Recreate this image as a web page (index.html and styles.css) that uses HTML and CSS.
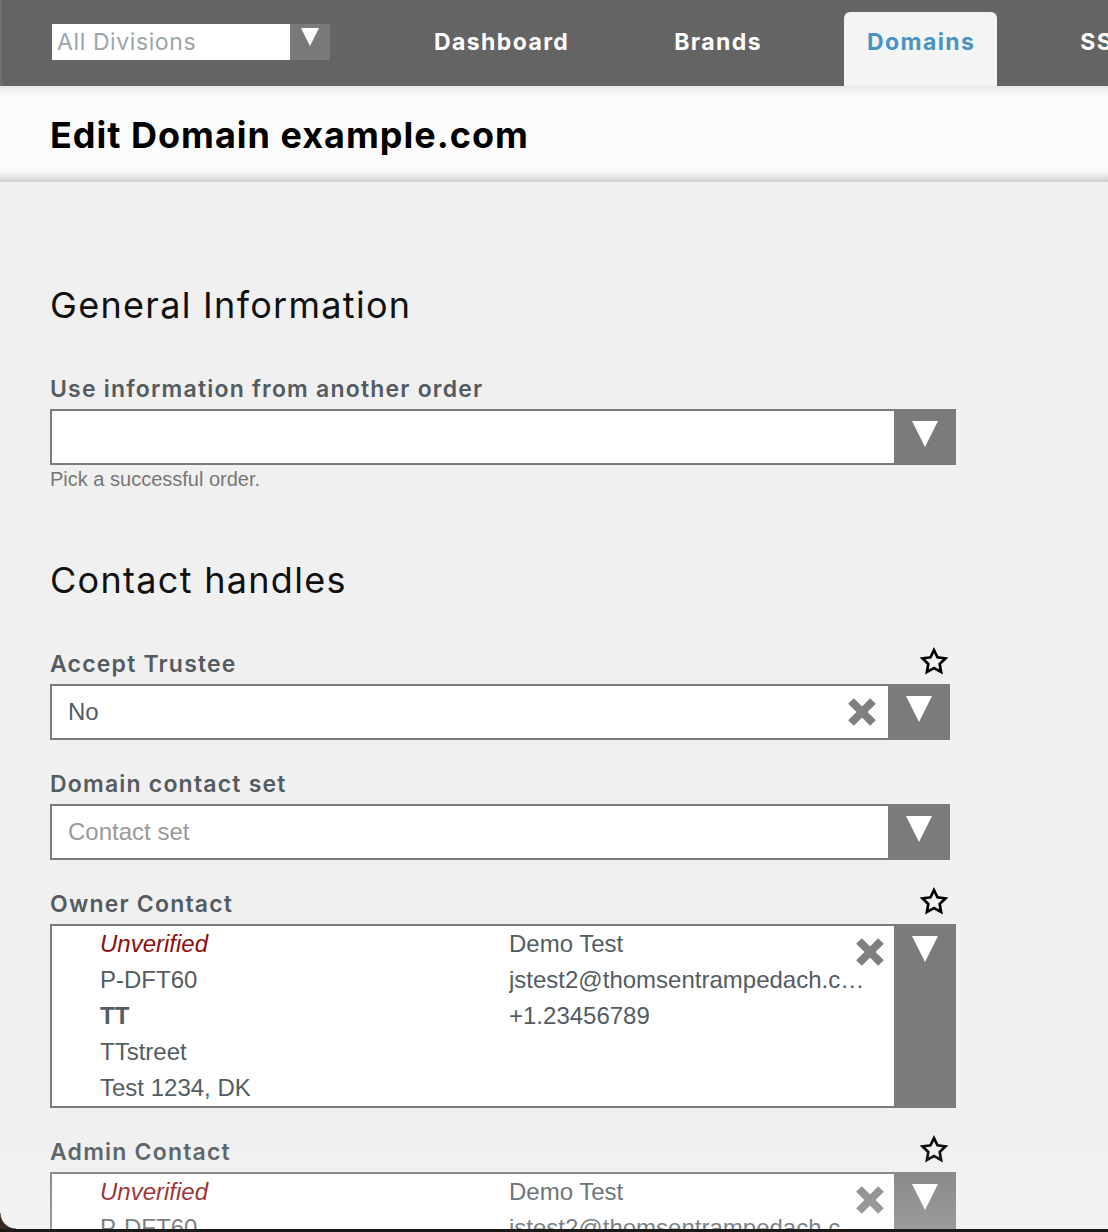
FILE: index.html
```
<!DOCTYPE html>
<html lang="en">

<head>
    <meta charset="UTF-8">
    <meta name="viewport" content="width=device-width, initial-scale=1.0">
    <title>Edit Domain example.com</title>
    <link rel="stylesheet" href="styles.css">
</head>

<body>
    <header class="topnav">
        <div class="division-select">
            <span class="division-value">All Divisions</span>
            <span class="division-arrow">
                <svg width="18" height="18" viewBox="0 0 18 18"><polygon points="0,0 18,0 9,18" fill="#fff"/></svg>
            </span>
        </div>
        <nav class="tabs">
            <a class="tab">Dashboard</a>
            <a class="tab">Brands</a>
            <a class="tab active">Domains</a>
            <a class="tab">SSL</a>
        </nav>
    </header>

    <div class="titlebar">
        <h1>Edit Domain example.com</h1>
    </div>

    <main class="content">
        <h2>General Information</h2>

        <div class="field">
            <label class="field-label">Use information from another order</label>
            <div class="select wide">
                <div class="select-value"></div>
                <span class="select-arrow">
                    <svg width="26" height="26" viewBox="0 0 26 26"><polygon points="0,0 26,0 13,26" fill="#fff"/></svg>
                </span>
            </div>
            <div class="help">Pick a successful order.</div>
        </div>

        <h2 class="section">Contact handles</h2>

        <div class="field">
            <div class="label-row">
                <label class="field-label">Accept Trustee</label>
                <svg class="star" width="30" height="29" viewBox="0 0 24 24"><path d="M12 2.6l2.9 6 6.6.9-4.8 4.6 1.2 6.5L12 17.4l-5.9 3.2 1.2-6.5-4.8-4.6 6.6-.9z" fill="none" stroke="#000" stroke-width="2.2"/></svg>
            </div>
            <div class="select">
                <div class="select-value">No</div>
                <span class="clear">
                    <svg width="32" height="32" viewBox="0 0 32 32"><path d="M5 5L27 27M27 5L5 27" stroke="#808080" stroke-width="8"/></svg>
                </span>
                <span class="select-arrow">
                    <svg width="26" height="26" viewBox="0 0 26 26"><polygon points="0,0 26,0 13,26" fill="#fff"/></svg>
                </span>
            </div>
        </div>

        <div class="field">
            <label class="field-label">Domain contact set</label>
            <div class="select">
                <div class="select-value placeholder">Contact set</div>
                <span class="select-arrow">
                    <svg width="26" height="26" viewBox="0 0 26 26"><polygon points="0,0 26,0 13,26" fill="#fff"/></svg>
                </span>
            </div>
        </div>

        <div class="field">
            <div class="label-row">
                <label class="field-label">Owner Contact</label>
                <svg class="star" width="30" height="29" viewBox="0 0 24 24"><path d="M12 2.6l2.9 6 6.6.9-4.8 4.6 1.2 6.5L12 17.4l-5.9 3.2 1.2-6.5-4.8-4.6 6.6-.9z" fill="none" stroke="#000" stroke-width="2.2"/></svg>
            </div>
            <div class="select wide contact">
                <div class="contact-card">
                    <div class="contact-col">
                        <div class="unverified">Unverified</div>
                        <div>P-DFT60</div>
                        <div class="org">TT</div>
                        <div>TTstreet</div>
                        <div>Test 1234, DK</div>
                    </div>
                    <div class="contact-col">
                        <div>Demo Test</div>
                        <div class="email">jstest2@thomsentrampedach.com</div>
                        <div>+1.23456789</div>
                    </div>
                    <span class="clear corner">
                        <svg width="32" height="32" viewBox="0 0 32 32"><path d="M5 5L27 27M27 5L5 27" stroke="#808080" stroke-width="8"/></svg>
                    </span>
                </div>
                <span class="select-arrow">
                    <svg width="26" height="26" viewBox="0 0 26 26"><polygon points="0,0 26,0 13,26" fill="#fff"/></svg>
                </span>
            </div>
        </div>

        <div class="field">
            <div class="label-row">
                <label class="field-label">Admin Contact</label>
                <svg class="star" width="30" height="29" viewBox="0 0 24 24"><path d="M12 2.6l2.9 6 6.6.9-4.8 4.6 1.2 6.5L12 17.4l-5.9 3.2 1.2-6.5-4.8-4.6 6.6-.9z" fill="none" stroke="#000" stroke-width="2.2"/></svg>
            </div>
            <div class="select wide contact">
                <div class="contact-card">
                    <div class="contact-col">
                        <div class="unverified">Unverified</div>
                        <div>P-DFT60</div>
                        <div class="org">TT</div>
                        <div>TTstreet</div>
                        <div>Test 1234, DK</div>
                    </div>
                    <div class="contact-col">
                        <div>Demo Test</div>
                        <div class="email">jstest2@thomsentrampedach.com</div>
                        <div>+1.23456789</div>
                    </div>
                    <span class="clear corner">
                        <svg width="32" height="32" viewBox="0 0 32 32"><path d="M5 5L27 27M27 5L5 27" stroke="#808080" stroke-width="8"/></svg>
                    </span>
                </div>
                <span class="select-arrow">
                    <svg width="26" height="26" viewBox="0 0 26 26"><polygon points="0,0 26,0 13,26" fill="#fff"/></svg>
                </span>
            </div>
        </div>
    </main>

    <!-- window edge at the bottom of the screenshot -->
    <div class="window-fade"></div>
    <div class="window-edge"></div>
    <div class="window-corner"></div>
</body>

</html>
```

FILE: styles.css
```
html,
body {
    margin: 0;
    padding: 0;
}

body {
    background: #f0f0f0;
    font-family: "Liberation Sans", Arial, sans-serif;
    color: #545c61;
    overflow: hidden;
    height: 1232px;
}

/* top navigation */
.topnav {
    display: flex;
    align-items: flex-start;
    height: 86px;
    background: #646464;
    border-left: 2px solid #707070;
    padding-left: 50px;
    white-space: nowrap;
    overflow: hidden;
}

.division-select {
    display: flex;
    margin-top: 24px;
    height: 36px;
    width: 278px;
    flex-shrink: 0;
}

.division-value {
    flex: 1;
    background: #fff;
    font-family: Inter, sans-serif;
    font-size: 23px;
    letter-spacing: 0.6px;
    line-height: 36px;
    color: #9ba5ac;
    padding-left: 5px;
}

.division-arrow {
    width: 40px;
    background: #7a7a7a;
    display: flex;
    justify-content: center;
    padding-top: 4px;
    box-sizing: border-box;
}

.tabs {
    display: flex;
    gap: 60px;
    margin-left: 81px;
    padding-top: 12px;
}

.tab {
    display: block;
    height: 74px;
    padding: 0 22px 0 23px;
    font-family: Inter, sans-serif;
    font-weight: 700;
    font-size: 23px;
    letter-spacing: 1.4px;
    line-height: 60px;
    color: #fff;
    border-radius: 6px 6px 0 0;
}

.tab.active {
    background: #f4f4f4;
    color: #4894bf;
}

/* page title */
.titlebar {
    height: 96px;
    background: #fbfbfb;
    padding-left: 50px;
    box-shadow: inset 0 10px 10px -8px rgba(0, 0, 0, 0.12), inset 0 -12px 10px -8px rgba(0, 0, 0, 0.22);
}

h1 {
    margin: 0;
    font-family: Inter, sans-serif;
    font-weight: 700;
    font-size: 36px;
    letter-spacing: 1px;
    line-height: 96px;
    color: #000;
    position: relative;
    top: 1px;
}

/* form */
.content {
    padding: 101px 0 0 50px;
}

h2 {
    margin: 0 0 48px;
    font-family: Inter, sans-serif;
    font-weight: 400;
    font-size: 36px;
    letter-spacing: 1.3px;
    line-height: 44px;
    color: #111;
}

h2.section {
    margin-top: 68px;
}

.field {
    width: 900px;
    margin-bottom: 30px;
}

.label-row {
    display: flex;
    justify-content: space-between;
    align-items: flex-start;
}

.field-label {
    display: block;
    font-family: Inter, sans-serif;
    font-weight: 600;
    font-size: 23px;
    letter-spacing: 1.2px;
    line-height: 28px;
    color: #545c61;
    margin-bottom: 6px;
}

.star {
    margin: -3px 1px 0 0;
}

.select {
    display: flex;
    height: 56px;
    box-sizing: border-box;
    border: 2px solid #7b7b7b;
    background: #fff;
}

.select.wide {
    width: 906px;
}

.select-value {
    flex: 1;
    padding-left: 16px;
    font-size: 24px;
    line-height: 52px;
    color: #545c61;
}

.select-value.placeholder {
    color: #9a9a9a;
}

.clear {
    display: flex;
    align-items: center;
    margin-right: 10px;
}

.select-arrow {
    width: 62px;
    flex-shrink: 0;
    margin: -2px -2px -2px 0;
    padding-top: 12px;
    box-sizing: border-box;
    background: #7b7b7b;
    display: flex;
    justify-content: center;
    align-items: flex-start;
}

.help {
    margin-top: 3px;
    font-size: 20px;
    line-height: 22px;
    color: #777;
}

.field:has(.help) {
    margin-bottom: 0;
}

/* contact cards */
.select.contact {
    height: auto;
}

.contact-card {
    flex: 1;
    position: relative;
    display: grid;
    grid-template-columns: 409px 357px;
    padding-left: 48px;
    font-size: 24px;
    line-height: 36px;
    color: #545c61;
    min-width: 0;
}

.contact-col div {
    white-space: nowrap;
    overflow: hidden;
    text-overflow: ellipsis;
}

.unverified {
    font-style: italic;
    color: #8b0f0f;
}

.org {
    font-weight: 700;
}

.clear.corner {
    position: absolute;
    top: 10px;
    right: 8px;
    margin: 0;
}

/* bottom edge of the captured window */
.window-fade {
    position: fixed;
    left: 0;
    right: 0;
    bottom: 0;
    height: 110px;
    background: linear-gradient(to bottom, rgba(255, 255, 255, 0), rgba(255, 255, 255, 0.25));
    pointer-events: none;
}

.window-edge {
    position: fixed;
    left: 0;
    right: 0;
    bottom: 0;
    height: 3px;
    background: #1c1a19;
}

.window-corner {
    position: fixed;
    left: 0;
    bottom: 3px;
    width: 16px;
    height: 16px;
    background: radial-gradient(circle at 100% 0, transparent 15px, #3a2b22 16px);
}
```
